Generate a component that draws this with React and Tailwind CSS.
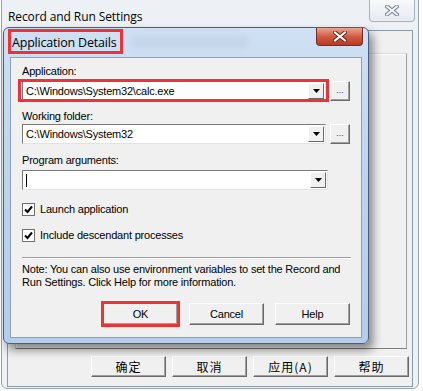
import React from "react";

const ui = "font-['Liberation_Sans',Arial,sans-serif] text-[11px] tracking-[-0.2px] text-black";

function Arrow() {
  return (
    <svg width="7" height="4" viewBox="0 0 7 4">
      <path d="M0 0H7L3.5 4Z" fill="#000" />
    </svg>
  );
}

function Combo({ value, caret }) {
  return (
    <div className="flex h-[20px] w-[306px] border border-t-[#7a7a7a] border-l-[#7a7a7a] border-r-[#e3e3e3] border-b-[#e3e3e3] bg-white">
      <div className="flex flex-1 items-center pl-[3px] leading-none">
        {caret ? <span className="inline-block h-[13px] w-px bg-black" /> : value}
      </div>
      <div className="my-[1px] mr-[1px] flex w-[16px] items-center justify-center border border-t-white border-l-white border-r-[#696969] border-b-[#696969] bg-[#f0f0f0]">
        <Arrow />
      </div>
    </div>
  );
}

function Dots() {
  return (
    <div className="flex h-[20px] w-[20px] items-center justify-center border border-t-white border-l-white border-r-[#696969] border-b-[#696969] bg-[#f0f0f0] shadow-[inset_-1px_-1px_0_#a0a0a0]">
      <span className="text-[9px] tracking-[0px] text-[#551a8b] leading-none -mt-[2px]">...</span>
    </div>
  );
}

function Check({ label }) {
  return (
    <div className="flex items-center gap-[5px]">
      <div className="flex h-[13px] w-[13px] items-center justify-center border border-[#707070] bg-white">
        <svg width="9" height="9" viewBox="0 0 9 9">
          <path d="M1 4.5L3.5 7L8 1.5" stroke="#000" strokeWidth="2" fill="none" />
        </svg>
      </div>
      <span className="leading-none">{label}</span>
    </div>
  );
}

function Btn({ children, h = "h-[22px]", cls = "" }) {
  return (
    <div
      className={`flex w-[75px] ${h} items-center justify-center border border-t-white border-l-white border-r-[#696969] border-b-[#696969] bg-[#f0f0f0] shadow-[inset_-1px_-1px_0_#a0a0a0] ${cls}`}
    >
      {children}
    </div>
  );
}

function XIcon({ color = "#fff", stroke = "#333" }) {
  return (
    <svg width="14" height="11" viewBox="0 0 14 11">
      <path d="M2 1.5L12 9.5M12 1.5L2 9.5" stroke={stroke} strokeWidth="4" strokeLinecap="square" />
      <path d="M2 1.5L12 9.5M12 1.5L2 9.5" stroke={color} strokeWidth="2" strokeLinecap="square" />
    </svg>
  );
}

export default function App() {
  return (
    <div className={`relative h-[391px] w-[423px] overflow-hidden bg-white ${ui}`}>
      {/* Outer window */}
      <div className="absolute left-[1px] top-[-6px] flex h-[395px] w-[418px] flex-col rounded-[6px] border border-[#9aa4b0] bg-[#edf1f6]">
        <div className="relative h-[35px] shrink-0">
          <div className="absolute left-[6px] top-[13px] font-['Open_Sans',sans-serif] text-[12px] tracking-[-0.1px] text-black">
            Record and Run Settings
          </div>
          <div className="absolute right-[3px] top-[5px] flex h-[22px] w-[46px] items-center justify-center rounded-b-[4px] border border-t-0 border-[#a9b2bd] bg-gradient-to-b from-[#f7f9fb] to-[#e6ebf1]">
            <XIcon color="#f2f4f7" stroke="#707b88" />
          </div>
        </div>
        <div className="mx-[5px] mb-[1px] flex flex-1 flex-col border border-[#8f9aa6] bg-[#f0f0f0]">
          <div className="ml-[7px] mr-[5px] mt-[22px] h-[296px] border border-t-[#d8d8d8] border-l-[#d8d8d8] border-r-[#a0a0a0] border-b-[#808080] bg-[#f0f0f0] shadow-[inset_1px_1px_0_white]" />
          <div className="mr-[3px] mt-[7px] flex justify-end gap-[6px] font-['Noto_Sans_CJK_SC',sans-serif] text-[12px] tracking-[1px]">
            <Btn h="h-[21px]">确定</Btn>
            <Btn h="h-[21px]">取消</Btn>
            <Btn h="h-[21px]">应用(A)</Btn>
            <Btn h="h-[21px]">帮助</Btn>
          </div>
        </div>
      </div>

      {/* Inner dialog */}
      <div className="absolute left-[3px] top-[27px] flex h-[317px] w-[366px] flex-col rounded-[6px] border border-[#48607e] bg-gradient-to-b from-[#cfe0f3] via-[#bdd4ee] to-[#b3cdea] shadow-[4px_6px_10px_rgba(0,0,0,0.45)]">
        <div className="relative h-[29px] shrink-0">
          <div className="absolute left-[8px] top-[6px] font-['Open_Sans',sans-serif] text-[12.5px] tracking-[-0.2px] text-black">
            Application Details
          </div>
          <div className="absolute left-[126px] top-[8px] h-[12px] w-[120px] rounded-full bg-[#b7c8da] opacity-40 blur-[3px]" />
          <div className="absolute right-[5px] top-0 flex h-[18px] w-[47px] items-center justify-center rounded-b-[4px] border border-t-0 border-[#7a2a20] bg-gradient-to-b from-[#e8a593] via-[#cf5a43] to-[#b83a22]">
            <XIcon color="#fff" stroke="#6a2418" />
          </div>
        </div>
        <div className="mx-[6px] mb-[5px] flex flex-1 flex-col border border-[#8aa0bc] bg-[#f0f0f0] px-[11px] pt-[8px]">
          <div className="leading-none">Application:</div>
          <div className="mt-[4px] flex items-center gap-[4px]">
            <Combo value="C:\Windows\System32\calc.exe" />
            <Dots />
          </div>
          <div className="mt-[10px] leading-none">Working folder:</div>
          <div className="mt-[2px] flex items-center gap-[4px]">
            <Combo value="C:\Windows\System32" />
            <Dots />
          </div>
          <div className="mt-[11px] leading-none">Program arguments:</div>
          <div className="mt-[4px] flex items-center">
            <Combo caret />
          </div>
          <div className="mt-[13px] flex flex-col gap-[13px]">
            <Check label="Launch application" />
            <Check label="Include descendant processes" />
          </div>
          <div className="mt-[15px] h-[2px] w-[329px] border-t border-t-[#a0a0a0] border-b border-b-white" />
          <div className="mt-[4px] leading-[13px]">
            Note: You can also use environment variables to set the Record and
            <br />
            Run Settings. Click Help for more information.
          </div>
          <div className="mt-[14px] flex justify-end gap-[11px]">
            <div className="relative">
              <Btn>OK</Btn>
              <div className="pointer-events-none absolute -left-[2px] -top-[2px] h-[26px] w-[79px] border-[3px] border-[#ee3338]" />
            </div>
            <Btn>Cancel</Btn>
            <Btn>Help</Btn>
          </div>
        </div>
      </div>

      {/* Red highlight overlays */}
      <div className="pointer-events-none absolute left-[8px] top-[29px] h-[25px] w-[115px] border-[3px] border-[#ee3338]" />
      <div className="pointer-events-none absolute left-[18px] top-[79px] h-[23px] w-[311px] border-[3px] border-[#ee3338]" />
    </div>
  );
}
